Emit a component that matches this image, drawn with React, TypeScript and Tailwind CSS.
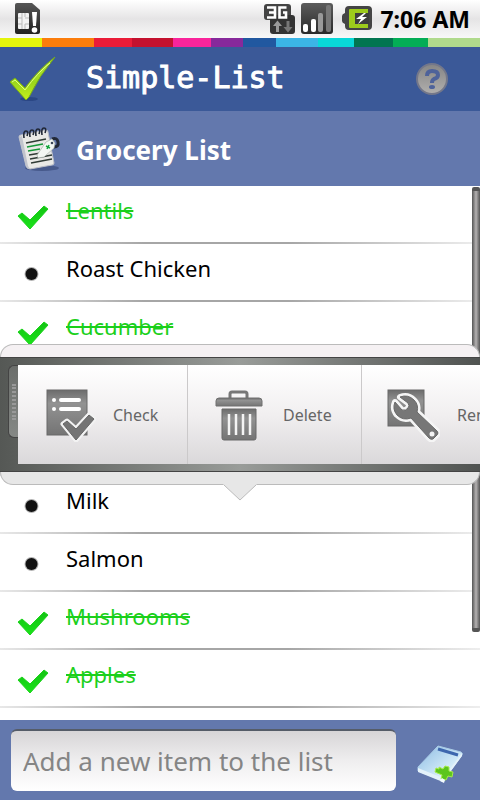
import { useState } from "react";

interface Item {
  id: number;
  name: string;
  done: boolean;
}

const STRIPES = [
  { id: "yellow", className: "grow-42 bg-[#e4f50b]" },
  { id: "orange", className: "grow-52 bg-[#fb7d0c]" },
  { id: "red", className: "grow-38 bg-[#ea1c38]" },
  { id: "crimson", className: "grow-41 bg-[#c4122f]" },
  { id: "pink", className: "grow-38 bg-[#f9259b]" },
  { id: "purple", className: "grow-32 bg-[#87299b]" },
  { id: "blue", className: "grow-33 bg-[#2158a0]" },
  { id: "sky", className: "grow-42 bg-[#3bb5e6]" },
  { id: "cyan", className: "grow-36 bg-[#09d8d8]" },
  { id: "forest", className: "grow-39 bg-[#027550]" },
  { id: "green", className: "grow-35 bg-[#04ad56]" },
  { id: "lime", className: "grow-52 bg-[#b0da8c]" },
];

const ITEMS: Item[] = [
  { id: 1, name: "Lentils", done: true },
  { id: 2, name: "Roast Chicken", done: false },
  { id: 3, name: "Cucumber", done: true },
  { id: 4, name: "", done: false },
  { id: 5, name: "", done: false },
  { id: 6, name: "Milk", done: false },
  { id: 7, name: "Salmon", done: false },
  { id: 8, name: "Mushrooms", done: true },
  { id: 9, name: "Apples", done: true },
];

function SimIcon() {
  return (
    <svg width="28" height="34" viewBox="0 0 28 34" aria-hidden="true">
      <defs>
        <linearGradient id="sim" x1="0" y1="0" x2="0" y2="1">
          <stop offset="0" stopColor="#555" />
          <stop offset="1" stopColor="#222" />
        </linearGradient>
      </defs>
      <path d="M3 1h15l8 7v22q0 2-2 2H3q-2 0-2-2V3q0-2 2-2z" fill="url(#sim)" />
      <rect x="4" y="11" width="11" height="16" rx="1" fill="#f4f4f4" />
      <path d="M4 16h4M4 22h4M11 16h4M11 22h4M8 11v16M11 11v4M11 22v5" stroke="#bbb" strokeWidth="1" fill="none" />
      <path d="M18 10h5l-1 14h-3z" fill="#fff" />
      <circle cx="20.500" cy="28" r="2.800" fill="#fff" />
    </svg>
  );
}

function NetworkIcon() {
  return (
    <svg width="34" height="34" viewBox="0 0 34 34" aria-hidden="true">
      <rect x="1" y="2" width="27" height="16" rx="3" fill="#444" />
      <rect x="7" y="13" width="25" height="19" rx="3" fill="#333" />
      <path d="M4 5.500h8v10H4M6 10.500h6" fill="none" stroke="#fff" strokeWidth="2.600" />
      <path d="M23.500 5.500h-7v10h6.500v-5h-3" fill="none" stroke="#fff" strokeWidth="2.600" />
      <path d="M14.500 18.500l4.500 5.500h-3v6h-3v-6h-3z" fill="#999" />
      <path d="M25 30.500L20.500 25h3v-6h3v6h3z" fill="#777" />
    </svg>
  );
}

function SignalIcon() {
  return (
    <svg width="34" height="34" viewBox="0 0 34 34" aria-hidden="true">
      <defs>
        <linearGradient id="signal" x1="0" y1="0" x2="0" y2="1">
          <stop offset="0" stopColor="#5c5c5c" />
          <stop offset="1" stopColor="#292929" />
        </linearGradient>
      </defs>
      <rect x="1" y="1" width="32" height="31" rx="3" fill="url(#signal)" />
      <rect x="3" y="22" width="5" height="8" rx="2" fill="#fff" />
      <rect x="11" y="17" width="5" height="13" rx="2" fill="#fff" />
      <rect x="18" y="11" width="5" height="19" rx="2" fill="#999" />
      <rect x="26" y="3" width="5" height="27" rx="2" fill="#777" />
    </svg>
  );
}

function BatteryIcon() {
  return (
    <svg width="32" height="34" viewBox="0 0 32 34" aria-hidden="true">
      <path d="M8 4h19q4 0 4 4v16q0 4-4 4H8q-4 0-4-4v-2q-3-1-3-3v-5q0-2 3-3V8q0-4 4-4z" fill="#444" />
      <path d="M9 7h18v4H14v11h13v4H9q-1 0-1-1V8q0-1 1-1z" fill="#9dcb1c" />
      <path d="M14 11h14v11H14z" fill="#3d3d3d" />
      <path d="M23 11l-8 6h5l-3 5 9-7h-5l4-4z" fill="#fff" />
    </svg>
  );
}

function LogoIcon() {
  return (
    <svg width="48" height="46" viewBox="0 0 48 46" aria-hidden="true">
      <defs>
        <linearGradient id="logo" x1="0" y1="0" x2="0" y2="1">
          <stop offset="0" stopColor="#b7e83a" />
          <stop offset="0.600" stopColor="#9cd71c" />
          <stop offset="1" stopColor="#c4f01b" />
        </linearGradient>
      </defs>
      <ellipse cx="20" cy="43" rx="9" ry="2" fill="#213c78" opacity="0.600" />
      <path d="M1 26l5-4 10 10Q29 14 46 1 30 20 20 41L17 44z" fill="url(#logo)" stroke="#79ad16" strokeWidth="1" strokeLinejoin="round" />
      <path d="M3 26l3-2 10 10Q29 16 41 7" fill="none" stroke="#e0ff81" strokeWidth="1" />
    </svg>
  );
}

function HelpIcon() {
  return (
    <svg width="34" height="34" viewBox="0 0 34 34" aria-hidden="true">
      <defs>
        <linearGradient id="help" x1="0" y1="0" x2="0" y2="1">
          <stop offset="0" stopColor="#858585" />
          <stop offset="1" stopColor="#b1afad" />
        </linearGradient>
      </defs>
      <circle cx="17" cy="17" r="15" fill="url(#help)" stroke="#73778a" strokeWidth="2" />
      <path d="M12 14q0-5 5-5 6 0 6 4 0 3-4 4-2 1-2 4" fill="none" stroke="#4e629a" strokeWidth="4" />
      <ellipse cx="17" cy="25" rx="3" ry="2" fill="#4e629a" />
    </svg>
  );
}

function NotepadIcon() {
  return (
    <svg width="44" height="46" viewBox="0 0 44 46" aria-hidden="true">
      <ellipse cx="24" cy="42" rx="17" ry="3" fill="#334475" opacity="0.600" />
      <path d="M1 11q0-2 2-2L28 4q2 0 2 2l6 31q0 2-2 2L12 43q-3 0-4-3z" fill="#e9e9e6" stroke="#bbbec6" />
      <path d="M1 11l7 29q1 3 4 3l-2-3L4 10z" fill="#c1c4cc" />
      <path d="M8 17l20-4M11 29l12-2M12 33l22-4M13 37l21-4" stroke="#303b35" strokeWidth="1.500" />
      <path d="M9 21l16-3M10 25l12-2" stroke="#159736" strokeWidth="1.500" />
      <path d="M6 12q-1-7 2-7t1 5M12 11q-1-7 2-7t1 5M18 10q-1-7 2-7t1 5M24 9q-1-7 2-7t1 5" fill="none" stroke="#202735" strokeWidth="1.600" />
      <path d="M34 13q5-2 6 3t-4 5" fill="none" stroke="#222937" strokeWidth="3" />
      <path d="M19 29l9-13 6-3 3 4-1 5-10 9-6 1z" fill="#f3f7f3" stroke="#a8b1aa" strokeWidth="0.700" />
      <path d="M28 20l4 2M31 19l-2 4" stroke="#16a43c" strokeWidth="1.500" />
      <circle cx="34" cy="17" r="1.300" fill="#3a4657" />
    </svg>
  );
}

function CheckIcon() {
  return (
    <svg width="34" height="30" viewBox="0 0 34 30" aria-hidden="true">
      <defs>
        <linearGradient id="tick" x1="0" y1="0" x2="0" y2="1">
          <stop offset="0" stopColor="#13c313" />
          <stop offset="1" stopColor="#1be31a" />
        </linearGradient>
      </defs>
      <path d="M2 14l4-3 8 7L28 4l4 3-18 20z" fill="url(#tick)" stroke="#1bd31b" strokeWidth="1" strokeLinejoin="round" />
    </svg>
  );
}

function BulletIcon() {
  return (
    <svg width="34" height="30" viewBox="0 0 34 30" aria-hidden="true">
      <circle cx="15.500" cy="14" r="7" fill="#666" opacity="0.500" />
      <circle cx="15.500" cy="14" r="6" fill="#111" />
    </svg>
  );
}

function ActionGradient({ id }: { id: string }) {
  return (
    <defs>
      <linearGradient id={id} x1="0" y1="0" x2="0" y2="1">
        <stop offset="0" stopColor="#6c6c6c" />
        <stop offset="0.300" stopColor="#929292" />
        <stop offset="1" stopColor="#747474" />
      </linearGradient>
    </defs>
  );
}

function CheckActionIcon() {
  return (
    <svg width="52" height="54" viewBox="0 0 52 54" aria-hidden="true">
      <ActionGradient id="action-check" />
      <rect x="3" y="2" width="40" height="45" fill="url(#action-check)" stroke="#696969" />
      <path d="M17 12h18M17 21h18" stroke="#fff" strokeWidth="4" strokeLinecap="round" />
      <circle cx="10" cy="12" r="2" fill="#fff" />
      <circle cx="10" cy="21" r="2" fill="#fff" />
      <path d="M19 36l4-3 9 8 13-14 5 4-18 21z" fill="#6d6d6d" stroke="#f2f2f2" strokeWidth="5" strokeLinejoin="round" />
      <path d="M19 36l4-3 9 8 13-14 5 4-18 21z" fill="#747474" stroke="#666" strokeWidth="1" strokeLinejoin="round" />
    </svg>
  );
}

function TrashIcon() {
  return (
    <svg width="52" height="54" viewBox="0 0 52 54" aria-hidden="true">
      <ActionGradient id="action-trash" />
      <path d="M16 11V6q0-2 2-2h13q2 0 2 2v5" fill="none" stroke="#777" strokeWidth="3" />
      <path d="M2 18v-5q0-3 3-3h40q3 0 3 3v5z" fill="url(#action-trash)" stroke="#707070" />
      <path d="M8 21h34v29q0 2-2 2H10q-2 0-2-2z" fill="url(#action-trash)" stroke="#686868" />
      <path d="M15 26v21M22 26v21M29 26v21M36 26v21" stroke="#f4f4f4" strokeWidth="2.500" />
    </svg>
  );
}

function WrenchIcon() {
  return (
    <svg width="54" height="54" viewBox="0 0 54 54" aria-hidden="true">
      <ActionGradient id="action-wrench" />
      <rect x="2" y="2" width="36" height="36" fill="url(#action-wrench)" stroke="#696969" />
      <path
        d="M14 9q8-3 14 3 5 5 3 12L51 43q2 2 0 4l-4 4q-2 1-4-1L25 30q-8 3-14-3-5-6-2-13l7 8q4 1 6-2 2-2 0-5z"
        fill="#777"
        stroke="#f5f5f5"
        strokeWidth="6"
        strokeLinejoin="round"
      />
      <path
        d="M14 9q8-3 14 3 5 5 3 12L51 43q2 2 0 4l-4 4q-2 1-4-1L25 30q-8 3-14-3-5-6-2-13l7 8q4 1 6-2 2-2 0-5z"
        fill="#777"
        stroke="#696969"
        strokeWidth="1"
        strokeLinejoin="round"
      />
      <circle cx="46" cy="46" r="2.500" fill="#f4f4f4" />
    </svg>
  );
}

function AddNoteIcon() {
  return (
    <svg width="48" height="42" viewBox="0 0 48 42" aria-hidden="true">
      <defs>
        <linearGradient id="note" x1="0" y1="0" x2="1" y2="1">
          <stop offset="0" stopColor="#8dbbe3" />
          <stop offset="0.700" stopColor="#d8effa" />
          <stop offset="1" stopColor="#9bc4e7" />
        </linearGradient>
      </defs>
      <path d="M22 3l23 6q2 1 1 3L27 38 2 28v-4z" fill="url(#note)" stroke="#a9cbe6" />
      <path d="M2 25l25 10L46 10v3L27 39 2 29z" fill="#e4f2fa" />
      <path d="M22 6l20 6" stroke="#3d67ae" strokeWidth="3" />
      <path d="M23 24l4 2 2-3 4 1v4l4 1-1 5-4-1-2 4-5-1 1-4-7-3 1-4 3 1z" fill="#5cc51c" stroke="#a7eb4b" strokeWidth="1" />
      <path d="M24 38l2-3 3 2-1 3z" fill="#f3fbff" />
    </svg>
  );
}

const ACTIONS = [
  { id: "check", label: "Check", icon: CheckActionIcon, className: "w-[170px] pl-[26px]" },
  { id: "delete", label: "Delete", icon: TrashIcon, className: "w-[174px] pl-[26px]" },
  { id: "rename", label: "Rename", icon: WrenchIcon, className: "w-[174px] pl-6" },
];

// Popup that opens over the rows, its pointer aimed at the selected item
function QuickActions({ onCheck }: { onCheck: () => void }) {
  return (
    <div role="toolbar" aria-label="Item actions" className="absolute inset-x-0 top-[158px] z-10">
      <div className="h-[13px] rounded-t-2xl border border-b-0 border-[#bbb] bg-[#f5f1f3]" />
      <div className="flex h-[115px] overflow-hidden border-y border-[#444] bg-linear-to-r from-[#555855] via-[#999c99] to-[#505351] py-[7px]">
        <div className="flex h-[73px] w-[18px] shrink-0 justify-end pl-2">
          <div className="flex h-full w-full items-center justify-center rounded-l-md border border-r-0 border-[#444] bg-linear-to-b from-[#6b6e6b] to-[#858885]">
            <div className="h-9 w-1 border-x-2 border-dotted border-[#999]" />
          </div>
        </div>
        <div className="flex shrink-0 bg-linear-to-b from-white via-[#f1eff0] to-[#dad8da]">
          {ACTIONS.map((action) => {
            const Icon = action.icon;
            return (
              <button
                key={action.id}
                type="button"
                onClick={action.id === "check" ? onCheck : undefined}
                className={`flex shrink-0 items-center gap-[17px] border-r border-[#cbc9ca] text-base text-[#666] ${action.className}`}
              >
                <Icon />
                {action.label}
              </button>
            );
          })}
        </div>
      </div>
      <div className="h-[13px] rounded-b-2xl border border-t-0 border-[#bbb] bg-[#e7e7e7]" />
      <svg width="34" height="17" viewBox="0 0 34 17" className="relative mx-auto -mt-px block" aria-hidden="true">
        <path d="M0 0h34L17 16z" fill="#e7e7e7" />
        <path d="M1 1l16 15L33 1" fill="none" stroke="#bbb" />
      </svg>
    </div>
  );
}

export default function App() {
  const [items, setItems] = useState(ITEMS);
  const [draft, setDraft] = useState("");

  const toggle = (id: number) => {
    setItems((prev) => prev.map((item) => (item.id === id ? { ...item, done: !item.done } : item)));
  };

  return (
    <div className="flex h-screen flex-col overflow-hidden bg-white font-['Noto_Sans','Open_Sans',sans-serif]">
      {/* Status bar */}
      <div className="flex h-[38px] shrink-0 items-center bg-linear-to-b from-white via-[#e5e4e5] to-[#f8f8f8] pr-[10px] pl-[14px]">
        <SimIcon />
        <div className="ml-auto flex items-center gap-[3px]">
          <NetworkIcon />
          <SignalIcon />
          <div className="pl-1">
            <BatteryIcon />
          </div>
          <span className="pl-1 text-[23px] font-bold text-black">7:06 AM</span>
        </div>
      </div>

      <div className="flex h-[9px] shrink-0">
        {STRIPES.map((stripe) => (
          <div key={stripe.id} className={stripe.className} />
        ))}
      </div>

      <header className="flex h-16 shrink-0 items-center bg-[#3b5998] pr-[31px] pl-[9px]">
        <LogoIcon />
        <h1 className="pb-1 pl-[29px] font-['DejaVu_Sans_Mono',monospace] text-[30px] text-white [-webkit-text-stroke:1px_white]">
          Simple-List
        </h1>
        <button type="button" aria-label="Help" className="ml-auto">
          <HelpIcon />
        </button>
      </header>

      <div className="flex h-[75px] shrink-0 items-center gap-[14px] bg-[#6378ad] pl-[18px]">
        <NotepadIcon />
        <h2 className="pt-1 text-[26px] font-bold text-white">Grocery List</h2>
      </div>

      <main className="relative flex min-h-0 flex-1 flex-col">
        <ul className="min-h-0 flex-1 overflow-hidden">
          {items.map((item) => (
            <li key={item.id}>
              <button
                type="button"
                aria-pressed={item.done}
                onClick={() => toggle(item.id)}
                className="flex h-14 w-full items-start gap-4 pl-4 text-left"
              >
                <span className="pt-4">{item.done ? <CheckIcon /> : <BulletIcon />}</span>
                <span
                  className={`pt-2 text-[22px] leading-8 ${item.done ? "text-[#1bd01b] line-through" : "text-black"}`}
                >
                  {item.name}
                </span>
              </button>
              <div className="h-[2px] bg-[linear-gradient(to_right,#e8e8e8,#a6a6a6_30%,#a6a6a6_60%,#eeeeee)]" />
            </li>
          ))}
        </ul>

        <div className="absolute top-px right-0 h-[445px] w-2 rounded-xs border-y-4 border-[#555] bg-linear-to-r from-[#555] via-[#b5b2b2] to-[#555]" />
        <QuickActions onCheck={() => toggle(5)} />
      </main>

      <form className="flex h-20 shrink-0 items-center bg-[#6378ad] pr-4 pl-[11px]" onSubmit={(e) => e.preventDefault()}>
        <input
          type="text"
          aria-label="Add a new item to the list"
          placeholder="Add a new item to the list"
          value={draft}
          onChange={(e) => setDraft(e.target.value)}
          className="h-[62px] min-w-0 flex-1 rounded-md border-t-2 border-[#555c68] bg-linear-to-b from-[#d7d5d7] via-[#efeeef] to-white px-3 text-[26px] text-black placeholder:text-[#858585]"
        />
        <button type="submit" aria-label="Add item" className="pt-2 pl-[20px]">
          <AddNoteIcon />
        </button>
      </form>
    </div>
  );
}
